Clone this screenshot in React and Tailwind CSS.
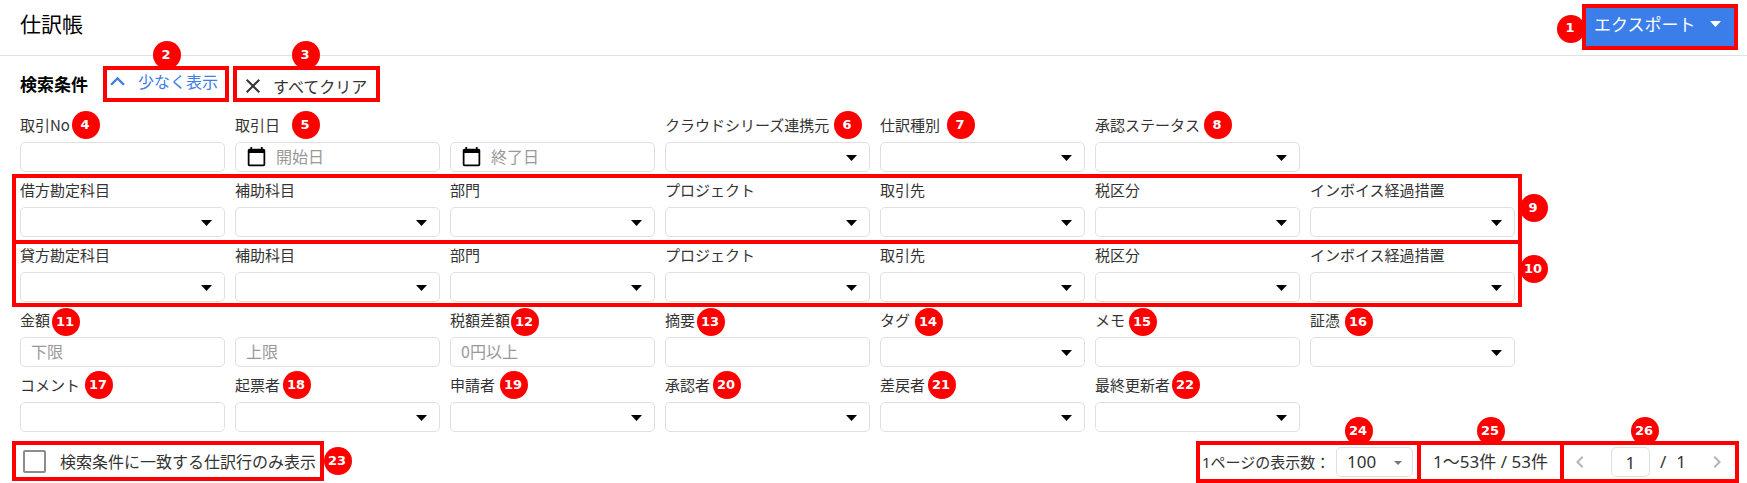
import React, { useState } from 'react';
import { MdCalendarToday, MdChevronLeft, MdChevronRight, MdClose, MdExpandLess } from 'react-icons/md';

const rows = [
    {
        key: 'basic',
        fields: [
            { id: 'no', label: '取引No', type: 'text', mark: 4, pos: 'left-[52px] -top-0.5' },
            { id: 'dateFrom', label: '取引日', type: 'date', placeholder: '開始日', mark: 5, pos: 'left-[57px] -top-0.5' },
            { id: 'dateTo', label: '', type: 'date', placeholder: '終了日' },
            { id: 'source', label: 'クラウドシリーズ連携元', type: 'select', mark: 6, pos: 'left-[169px] -top-0.5' },
            { id: 'kind', label: '仕訳種別', type: 'select', mark: 7, pos: 'left-[67px] -top-0.5' },
            { id: 'status', label: '承認ステータス', type: 'select', mark: 8, pos: 'left-[109px] -top-0.5' },
        ],
    },
    {
        key: 'debit',
        mark: 9,
        frame: '-top-1 -bottom-[7px]',
        pos: '-right-[33px] top-4',
        fields: [
            { id: 'drAccount', label: '借方勘定科目', type: 'select' },
            { id: 'drSub', label: '補助科目', type: 'select' },
            { id: 'drDept', label: '部門', type: 'select' },
            { id: 'drProject', label: 'プロジェクト', type: 'select' },
            { id: 'drPartner', label: '取引先', type: 'select' },
            { id: 'drTax', label: '税区分', type: 'select' },
            { id: 'drInvoice', label: 'インボイス経過措置', type: 'select' },
        ],
    },
    {
        key: 'credit',
        mark: 10,
        frame: '-top-[3px] -bottom-[5px]',
        pos: '-right-[33px] top-3',
        fields: [
            { id: 'crAccount', label: '貸方勘定科目', type: 'select' },
            { id: 'crSub', label: '補助科目', type: 'select' },
            { id: 'crDept', label: '部門', type: 'select' },
            { id: 'crProject', label: 'プロジェクト', type: 'select' },
            { id: 'crPartner', label: '取引先', type: 'select' },
            { id: 'crTax', label: '税区分', type: 'select' },
            { id: 'crInvoice', label: 'インボイス経過措置', type: 'select' },
        ],
    },
    {
        key: 'amount',
        fields: [
            { id: 'min', label: '金額', type: 'text', placeholder: '下限', mark: 11, pos: 'left-8 top-0' },
            { id: 'max', label: '', type: 'text', placeholder: '上限' },
            { id: 'taxDiff', label: '税額差額', type: 'text', placeholder: '0円以上', mark: 12, pos: 'left-[61px] top-0' },
            { id: 'summary', label: '摘要', type: 'text', mark: 13, pos: 'left-8 top-0' },
            { id: 'tag', label: 'タグ', type: 'select', mark: 14, pos: 'left-[35px] top-0' },
            { id: 'memo', label: 'メモ', type: 'text', mark: 15, pos: 'left-[34px] top-0' },
            { id: 'voucher', label: '証憑', type: 'select', mark: 16, pos: 'left-[35px] top-0' },
        ],
    },
    {
        key: 'people',
        fields: [
            { id: 'comment', label: 'コメント', type: 'text', mark: 17, pos: 'left-[65px] -top-0.5' },
            { id: 'drafter', label: '起票者', type: 'select', mark: 18, pos: 'left-12 -top-0.5' },
            { id: 'applicant', label: '申請者', type: 'select', mark: 19, pos: 'left-[50px] -top-0.5' },
            { id: 'approver', label: '承認者', type: 'select', mark: 20, pos: 'left-12 -top-0.5' },
            { id: 'rejecter', label: '差戻者', type: 'select', mark: 21, pos: 'left-12 -top-0.5' },
            { id: 'updater', label: '最終更新者', type: 'select', mark: 22, pos: 'left-[77px] -top-0.5' },
        ],
    },
];

const inputClass =
    'h-[30px] w-full rounded-[5px] border border-[#e0e0e0] bg-white pr-2 pb-0.5 text-base text-[#333] placeholder:text-[#999] focus:outline-none';

function Badge({ n, className }) {
    return (
        <span
            className={`absolute z-10 flex size-7 items-center justify-center rounded-full bg-[#f00] pr-0.5 pb-0.5 font-['DejaVu_Sans',sans-serif] text-[13px] leading-none font-bold text-white ${className}`}
        >
            {n}
        </span>
    );
}

function Frame({ className }) {
    return <span className={`pointer-events-none absolute border-4 border-[#f00] ${className}`} />;
}

function Arrow({ className }) {
    return (
        <svg viewBox="0 0 11 6" className={`pointer-events-none h-1.5 w-[11px] fill-current ${className}`}>
            <path d="M0 0h11L5.5 6z" />
        </svg>
    );
}

function Field({ field }) {
    return (
        <div className="flex min-w-0 flex-col gap-[5px]">
            <div className="relative h-6 text-[15px] leading-6 whitespace-nowrap">
                <label htmlFor={field.id}>{field.label}</label>
                {field.mark && <Badge n={field.mark} className={field.pos} />}
            </div>
            <div className="relative">
                {field.type === 'select' && (
                    <>
                        <select id={field.id} className={`${inputClass} appearance-none pl-2.5`} />
                        <Arrow className="absolute top-[13px] right-[13px] text-black" />
                    </>
                )}
                {field.type === 'text' && (
                    <input id={field.id} type="text" placeholder={field.placeholder} className={`${inputClass} pl-2.5`} />
                )}
                {field.type === 'date' && (
                    <>
                        <MdCalendarToday size={21} className="absolute top-1 left-[11px] text-black" />
                        <input
                            id={field.id}
                            type="text"
                            aria-label={field.placeholder}
                            placeholder={field.placeholder}
                            className={`${inputClass} pl-10`}
                        />
                    </>
                )}
            </div>
        </div>
    );
}

function App() {
    const [matchOnly, setMatchOnly] = useState(false);
    const [page, setPage] = useState('1');

    return (
        <div className="bg-white font-['Noto_Sans_CJK_JP',sans-serif] text-[#333]">
            <header className="flex h-14 items-center justify-between border-b border-[#e0e0e0] pr-[9px] pb-0.5 pl-5">
                <h1 className="pb-1.5 text-[21px] text-black">仕訳帳</h1>
                <div className="relative">
                    <Badge n={1} className="top-[11px] -left-[25px]" />
                    <button className="flex h-[46px] w-[156px] items-center gap-3.5 bg-[#3b7de9] pb-1.5 pl-3 text-[17px] whitespace-nowrap text-white">
                        エクスポート
                        <Arrow className="text-white" />
                    </button>
                    <Frame className="inset-0" />
                </div>
            </header>

            <main>
                <section className="px-5">
                    <div className="flex items-start pt-2.5">
                        <h2 className="w-[83px] text-[17px] leading-9 font-bold whitespace-nowrap text-black">検索条件</h2>
                        <div className="relative">
                            <Badge n={2} className="-top-[25px] left-[50px]" />
                            <button className="flex h-9 w-[126px] items-center gap-1.5 pb-1.5 text-base whitespace-nowrap text-[#3b7de9]">
                                <MdExpandLess size={29} />
                                少なく表示
                            </button>
                            <Frame className="inset-0" />
                        </div>
                        <div className="relative ml-1">
                            <Badge n={3} className="-top-[25px] left-[59px]" />
                            <button className="flex h-9 w-[147px] items-center gap-2 pt-1 pl-2 text-base whitespace-nowrap">
                                <MdClose size={24} />
                                すべてクリア
                            </button>
                            <Frame className="inset-0" />
                        </div>
                    </div>

                    <div className="mt-[11px] flex max-w-[1495px] flex-col gap-1.5">
                        {rows.map((row) => (
                            <div key={row.key} className="relative grid grid-cols-7 gap-2.5">
                                {row.fields.map((field) => (
                                    <Field key={field.id} field={field} />
                                ))}
                                {row.frame && <Frame className={`-right-[7px] -left-2 ${row.frame}`} />}
                                {row.mark && <Badge n={row.mark} className={row.pos} />}
                            </div>
                        ))}
                    </div>
                </section>

                <div className="mt-[9px] flex items-start justify-between pr-2 pl-3 whitespace-nowrap">
                    <div className="relative border-4 border-[#f00]">
                        <label className="flex h-8 w-[304px] items-center gap-3.5 pl-[7px] text-base">
                            <input
                                type="checkbox"
                                checked={matchOnly}
                                onChange={(e) => setMatchOnly(e.target.checked)}
                                className="size-[23px] shrink-0 appearance-none rounded-[2px] border-2 border-[#8c8c8c] checked:bg-[#3b7de9]"
                            />
                            検索条件に一致する仕訳行のみ表示
                        </label>
                        <Badge n={23} className="top-0.5 -right-8" />
                    </div>

                    <div className="flex text-[17px] font-['Noto_Sans','Noto_Sans_CJK_JP',sans-serif]">
                        <div className="relative flex h-[42px] w-[225px] items-center border-4 border-[#f00] pl-0.5">
                            <label htmlFor="perPage" className="w-[134px] text-[15px]">
                                1ページの表示数：
                            </label>
                            <div className="relative">
                                <select
                                    id="perPage"
                                    className="h-[30px] w-[77px] appearance-none rounded-[5px] border border-[#e0e0e0] bg-white pl-2.5 focus:outline-none"
                                >
                                    <option>100</option>
                                </select>
                                <svg viewBox="0 0 8 4" className="pointer-events-none absolute top-3.5 right-[11px] h-1 w-2 fill-[#777]">
                                    <path d="M0 0h8L4 4z" />
                                </svg>
                            </div>
                            <Badge n={24} className="-top-7 left-[145px]" />
                        </div>
                        <div className="relative -ml-1 flex h-[42px] w-[147px] items-center justify-center border-4 border-[#f00]">
                            1～53件 / 53件
                            <Badge n={25} className="-top-7 left-14" />
                        </div>
                        <nav className="relative -ml-1 flex h-[42px] w-[179px] items-center justify-between border-4 border-[#f00] pr-1.5 pl-1">
                            <button aria-label="前のページ" className="text-[#b5b5b5]">
                                <MdChevronLeft size={24} />
                            </button>
                            <div className="flex items-center gap-2.5">
                                <input
                                    type="text"
                                    aria-label="ページ"
                                    value={page}
                                    onChange={(e) => setPage(e.target.value)}
                                    className="h-[30px] w-[39px] rounded-[5px] border border-[#e0e0e0] text-center focus:outline-none"
                                />
                                <span>/</span>
                                <span>1</span>
                            </div>
                            <button aria-label="次のページ" className="text-[#b5b5b5]">
                                <MdChevronRight size={24} />
                            </button>
                            <Badge n={26} className="-top-7 left-[67px]" />
                        </nav>
                    </div>
                </div>
            </main>
        </div>
    );
}

export default App;
